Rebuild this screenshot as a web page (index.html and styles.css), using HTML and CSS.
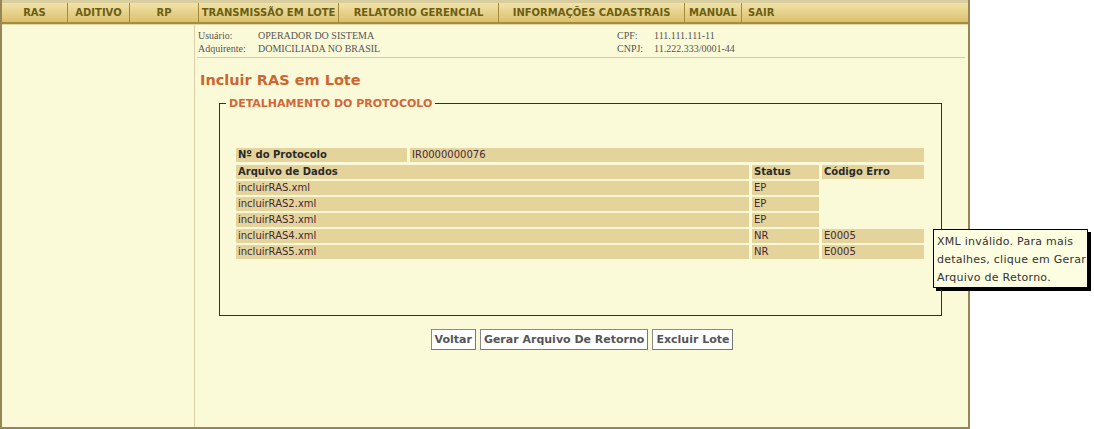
FILE: index.html
```html
<!DOCTYPE html>
<html lang="pt-BR">
<head>
<meta charset="utf-8">
<title>Incluir RAS em Lote</title>
<link rel="stylesheet" href="styles.css">
</head>
<body>
<div class="page">
  <nav class="nav">
    <a class="nav-item w-ras">RAS</a>
    <a class="nav-item w-aditivo">ADITIVO</a>
    <a class="nav-item w-rp">RP</a>
    <a class="nav-item w-trans">TRANSMISSÃO EM LOTE</a>
    <a class="nav-item w-rel">RELATORIO GERENCIAL</a>
    <a class="nav-item w-info">INFORMAÇÕES CADASTRAIS</a>
    <a class="nav-item w-manual">MANUAL</a>
    <a class="nav-item w-sair last">SAIR</a>
  </nav>
  <div class="body">
    <aside class="side"></aside>
    <main class="main">
      <div class="info">
        <div class="info-col">
          <div class="info-row"><span class="lbl">Usuário:</span><span>OPERADOR DO SISTEMA</span></div>
          <div class="info-row"><span class="lbl">Adquirente:</span><span>DOMICILIADA NO BRASIL</span></div>
        </div>
        <div class="info-col right">
          <div class="info-row"><span class="lbl2">CPF:</span><span>111.111.111-11</span></div>
          <div class="info-row"><span class="lbl2">CNPJ:</span><span>11.222.333/0001-44</span></div>
        </div>
      </div>
      <h1 class="title">Incluir RAS em Lote</h1>
      <fieldset class="box">
        <legend class="legend">DETALHAMENTO DO PROTOCOLO</legend>
        <div class="grid proto">
          <div class="cell b">Nº do Protocolo</div>
          <div class="cell">IR0000000076</div>
        </div>
        <div class="grid files">
          <div class="cell b">Arquivo de Dados</div>
          <div class="cell b">Status</div>
          <div class="cell b">Código Erro</div>

          <div class="cell">incluirRAS.xml</div>
          <div class="cell">EP</div>
          <div class="empty"></div>

          <div class="cell">incluirRAS2.xml</div>
          <div class="cell">EP</div>
          <div class="empty"></div>

          <div class="cell">incluirRAS3.xml</div>
          <div class="cell">EP</div>
          <div class="empty"></div>

          <div class="cell">incluirRAS4.xml</div>
          <div class="cell">NR</div>
          <div class="cell">E0005</div>

          <div class="cell">incluirRAS5.xml</div>
          <div class="cell">NR</div>
          <div class="cell">E0005</div>
        </div>
      </fieldset>
      <div class="actions">
        <button class="btn">Voltar</button>
        <button class="btn">Gerar Arquivo De Retorno</button>
        <button class="btn">Excluir Lote</button>
      </div>
    </main>
  </div>
</div>
<div class="tooltip">XML inválido. Para mais<br>detalhes, clique em Gerar<br>Arquivo de Retorno.</div>
</body>
</html>
```

FILE: styles.css
```css
html, body {
  margin: 0;
  padding: 0;
  background: #ffffff;
}
body {
  font-family: "DejaVu Sans", Verdana, sans-serif;
  font-size: 11px;
  color: #333;
}
.page {
  width: 966px;
  height: 427px;
  background: #fbfad8;
  border-left: 2px solid #978656;
  border-right: 2px solid #978656;
  border-bottom: 2px solid #978656;
  display: flex;
  flex-direction: column;
}
.nav {
  display: flex;
  height: 19px;
  border-top: 3px solid #d9cea0;
  border-bottom: 2px solid #a38d3c;
  background: linear-gradient(#f1e3a8, #dcc06e);
  box-shadow: 0 1px 0 #e3d7a4;
}
.nav-item {
  display: flex;
  align-items: center;
  justify-content: center;
  font-weight: bold;
  font-size: 10px;
  color: #6b5e12;
  border-right: 1px solid #a58a3a;
  box-sizing: border-box;
  height: 19px;
  white-space: nowrap;
}
.nav-item.last { border-right: none; justify-content: flex-start; padding-left: 6px; }
.w-ras { width: 66px; }
.w-aditivo { width: 62px; }
.w-rp { width: 69px; }
.w-trans { width: 140px; }
.w-rel { width: 160px; }
.w-info { width: 186px; }
.w-manual { width: 57px; }
.w-sair { flex: 1; }

.body {
  flex: 1;
  display: flex;
}
.side {
  width: 192px;
  border-right: 1px solid #dccfa6;
}
.main {
  flex: 1;
  padding: 0 2px 0 2px;
  position: relative;
}
.info {
  display: flex;
  font-family: "Liberation Serif", "Times New Roman", serif;
  font-size: 10px;
  color: #555;
  padding: 5px 0 2px 1px;
  border-bottom: 1px solid #d9cc9c;
  margin-right: 1px;
}
.info-col { width: 419px; }
.info-col.right { width: 300px; }
.info-row { line-height: 13px; display: flex; }
.lbl { width: 60px; }
.lbl2 { width: 37px; }

.title {
  margin: 14px 0 0 3px;
  font-size: 14.5px;
  font-weight: bold;
  color: #cc6633;
  line-height: 17px;
}
.box {
  margin: 8px 24px 0 22px;
  border: 1px solid #2b3a12;
  padding: 38px 16px 56px 16px;
  min-width: 0;
}
.legend {
  color: #d0683a;
  font-weight: bold;
  font-size: 11px;
  padding: 0 3px;
  margin-left: -10px;
}
.grid {
  display: grid;
  column-gap: 3px;
  row-gap: 2px;
}
.proto {
  grid-template-columns: 171px 514px;
  margin-bottom: 3px;
}
.files {
  grid-template-columns: 513px 67px 102px;
}
.cell {
  background: #e4d39b;
  height: 14px;
  line-height: 14px;
  padding-left: 2px;
  font-size: 10px;
  color: #452b38;
  white-space: nowrap;
}
.cell.b { font-weight: bold; color: #2a2a2a; }
.empty { height: 14px; }

.actions {
  display: flex;
  justify-content: center;
  gap: 4px;
  margin-top: 13px;
  padding-left: 1px;
}
.btn {
  font-family: "DejaVu Sans", Verdana, sans-serif;
  font-weight: bold;
  font-size: 11px;
  color: #555;
  background: #fff;
  border: 1px solid #8a8a8a;
  border-right-color: #777;
  border-bottom-color: #777;
  height: 21px;
  padding: 0 3px;
  margin: 0;
}

.tooltip {
  position: absolute;
  left: 933px;
  top: 229px;
  width: 150px;
  height: 54px;
  padding: 3px 0 0 3px;
  background: #fdfde2;
  border: 1px solid #000;
  box-shadow: 3px 3px 0 #000;
  font-size: 11px;
  letter-spacing: 0.25px;
  line-height: 18px;
  color: #333;
  white-space: nowrap;
}
```
